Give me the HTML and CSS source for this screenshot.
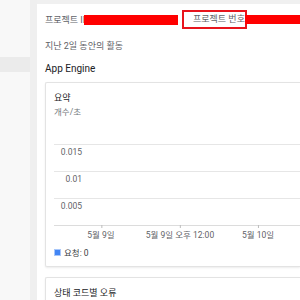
FILE: index.html
```html
<!DOCTYPE html>
<html lang="ko">
<head>
  <meta charset="UTF-8" />
  <title>App Engine 대시보드</title>
  <link rel="stylesheet" href="styles.css">
</head>
<body>
  <div class="sidebar">
    <div class="nav-item"></div>
  </div>
  <div class="gutter"></div>

  <div class="main">
    <div class="project-row">
      <span class="label">프로젝트 ID</span>
      <span class="redact redact-id"></span>
      <span class="boxed">프로젝트 번호</span>
      <span class="redact redact-num"></span>
    </div>

    <div class="period">지난 2일 동안의 활동</div>
    <h2 class="section">App Engine</h2>

    <div class="card">
      <div class="card-title">요약</div>
      <div class="card-sub">개수/초</div>

      <div class="chart">
        <div class="grid-row"><span class="y-label">0.015</span></div>
        <div class="grid-row"><span class="y-label">0.01</span></div>
        <div class="grid-row"><span class="y-label">0.005</span></div>
        <div class="x-axis">
          <span class="tick" style="left: 47px">5월 9일</span>
          <span class="tick" style="left: 126px">5월 9일 오후 12:00</span>
          <span class="tick" style="left: 204px">5월 10일</span>
        </div>
      </div>

      <div class="legend">
        <span class="swatch"></span>
        <span>요청: 0</span>
      </div>
    </div>

    <div class="card card-next">
      <div class="card-title">상태 코드별 오류</div>
    </div>
  </div>
</body>
</html>
```

FILE: styles.css
```css
body {
  margin: 0;
  height: 300px;
  overflow: hidden;
  display: flex;
  font-family: Roboto, "Noto Sans CJK KR", sans-serif;
  color: #3c4043;
  background: #f7f7f7;
}

.sidebar {
  width: 30px;
  flex: none;
  background: #f8f8f8;
  padding-top: 57px;
  box-sizing: border-box;
}

.nav-item {
  height: 15px;
  background: #ebebeb;
}

.gutter {
  width: 7px;
  flex: none;
  background: #efefef;
}

.main {
  flex: 1;
  min-width: 0;
  background: #fff;
  border-top: 4px solid #f0f0f0;
  padding: 6px 0 0 8px;
  overflow: hidden;
}

.project-row {
  display: flex;
  align-items: center;
  height: 19px;
  font-size: 9px;
  color: #5f6368;
  white-space: nowrap;
}

.label {
  width: 39px;
  flex: none;
}

.redact {
  height: 10px;
  background: #ff0000;
  flex: none;
}

.redact-id {
  width: 94px;
}

.redact-num {
  width: 60px;
  height: 9px;
  margin-left: -2px;
}

.boxed {
  flex: none;
  width: 52px;
  height: 15px;
  line-height: 15px;
  margin-left: 4px;
  padding-left: 9px;
  box-sizing: content-box;
  border: 2px solid #e8141c;
  overflow: hidden;
  color: #5f6368;
}

.period {
  margin-top: 10px;
  font-size: 9px;
  line-height: 14px;
  color: #5f6368;
}

.section {
  margin: 9px 0 0;
  font-size: 10px;
  font-weight: 400;
  line-height: 14px;
  color: #202124;
}

.card {
  margin-top: 6px;
  border: 1px solid #e3e3e3;
  border-right: none;
  border-radius: 2px 0 0 2px;
  box-shadow: 0 1px 2px rgba(0, 0, 0, 0.08);
  padding: 8px 0 6px 8px;
  height: 169px;
}

.card-title {
  font-size: 9px;
  line-height: 14px;
  color: #202124;
}

.card-sub {
  font-size: 8.5px;
  line-height: 14px;
  color: #70757a;
}

.chart {
  margin-top: 25px;
  position: relative;
}

.grid-row {
  height: 26px;
  border-top: 1px solid #e6e6e6;
  font-size: 8.5px;
  color: #5f6368;
}

.y-label {
  display: block;
  width: 28px;
  text-align: right;
  line-height: 14px;
}

.x-axis {
  position: relative;
  height: 18px;
  border-top: 1px solid #dcdcdc;
  font-size: 8.5px;
  color: #5f6368;
}

.tick {
  position: absolute;
  top: 2px;
  transform: translateX(-50%);
  white-space: nowrap;
  line-height: 14px;
}

.tick::before {
  content: "";
  position: absolute;
  left: 50%;
  top: -3px;
  width: 1px;
  height: 3px;
  background: #bdbdbd;
}

.legend {
  display: flex;
  align-items: center;
  gap: 3px;
  margin-top: 2px;
  font-size: 8.5px;
  color: #3c4043;
}

.swatch {
  width: 5px;
  height: 5px;
  background: #4285f4;
  border: 1px solid #a8c7fa;
}

.card-next {
  margin-top: 10px;
  padding-top: 8px;
  height: 40px;
}
```
